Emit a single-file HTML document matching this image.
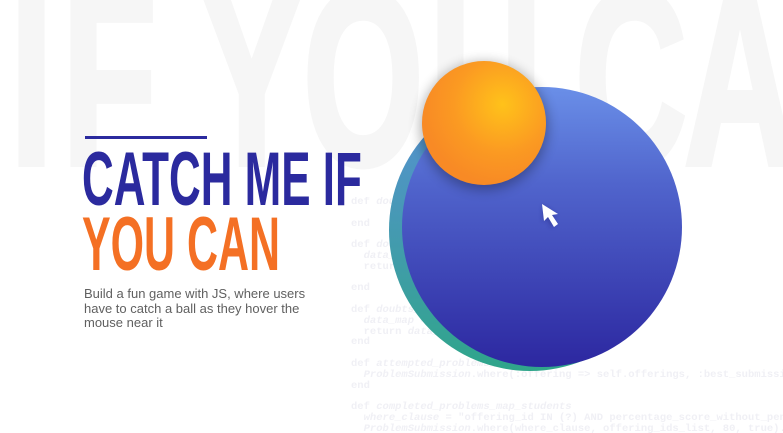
<!DOCTYPE html>
<html><head><meta charset="utf-8"><style>
html,body{margin:0;padding:0}
body{width:783px;height:433px;overflow:hidden;background:#fff;position:relative;font-family:"Liberation Sans",sans-serif}
.bg{position:absolute;color:#f6f6f6;font-weight:bold;font-size:250px;line-height:1;top:-47px;transform-origin:0 0;transform:scaleX(.62);-webkit-text-stroke:6px #f6f6f6}
.codewrap{position:absolute;left:351px;top:197px;width:432px;height:236px;overflow:hidden}
.code{font-family:"Liberation Mono",monospace;font-weight:bold;font-size:10.5px;line-height:10.8px;color:#f0f0f5;white-space:pre}
.t{position:absolute;left:82px;font-weight:bold;font-size:76px;line-height:1;transform-origin:0 0;white-space:nowrap}
</style></head><body>
<div class="bg" style="left:10px">I</div>
<div class="bg" style="left:62px">F</div>
<div class="bg" style="left:200px">Y</div>
<div class="bg" style="left:303px">O</div>
<div class="bg" style="left:430px">U</div>
<div class="bg" style="left:575px">C</div>
<div class="bg" style="left:684px">A</div>

<div class="codewrap"><div class="code">def <i>doubts_map</i>

end

def <i>doubts_students</i>
  <i>data_map</i> = ...
  return data_map

end

def <i>doubts_to_students</i>
  <i>data_map</i> = ...
  return <i>data_map</i>
end

def <i>attempted_problems_map</i>
  <i>ProblemSubmission</i>.where(:offering => self.offerings, :best_submission => true).group
end

def <i>completed_problems_map_students</i>
  <i>where_clause</i> = "offering_id IN (?) AND percentage_score_without_penalty >= ? AND best
  <i>ProblemSubmission</i>.where(where_clause, offering_ids_list, 80, true).group(:user_id).c</div></div>

<div style="position:absolute;left:85px;top:136px;width:122px;height:3px;background:#2b2a9e"></div>
<div class="t" style="top:142px;color:#2b2a9e;transform:scaleX(.578)">CATCH ME IF</div>
<div class="t" style="top:207px;color:#f47024;transform:scaleX(.565)">YOU CAN</div>
<div style="position:absolute;left:84px;top:287px;width:245px;font-size:13px;line-height:14.5px;color:#606060">Build a fun game with JS, where users have to catch a ball as they hover the mouse near it</div>

<svg style="position:absolute;left:0;top:0" width="783" height="433">
<defs>
<linearGradient id="tl" x1="0" y1="0" x2="0" y2="1"><stop offset="0" stop-color="#5a8fd8"/><stop offset="1" stop-color="#2fa58a"/></linearGradient>
<linearGradient id="bl" x1="0" y1="0" x2="0" y2="1"><stop offset="0" stop-color="#6a8fe8"/><stop offset=".35" stop-color="#5064cc"/><stop offset="1" stop-color="#2c27a0"/></linearGradient>
<radialGradient id="or" cx=".65" cy=".35" r=".65"><stop offset="0" stop-color="#ffc21a"/><stop offset=".6" stop-color="#fb9a22"/><stop offset="1" stop-color="#f88a25"/></radialGradient>
<filter id="sh" x="-40%" y="-40%" width="180%" height="180%"><feGaussianBlur stdDeviation="6"/></filter>
<filter id="sh2" x="-50%" y="-50%" width="200%" height="200%"><feGaussianBlur stdDeviation="2.5"/></filter>
</defs>
<circle cx="530" cy="230" r="141" fill="url(#tl)"/>
<circle cx="542" cy="227" r="140" fill="url(#bl)"/>
<circle cx="484" cy="126" r="64" fill="#000" opacity=".3" filter="url(#sh)"/>
<circle cx="484" cy="123" r="62" fill="url(#or)"/>
<path d="M543 205 L543 222 L547 218 L551 227 L555 225 L551 217 L557 216 Z" fill="#1a1a70" opacity=".4" filter="url(#sh2)"/>
<path d="M542 204 L544 221 L548 217 L554 227 L558 224 L552 215 L558 214 Z" fill="#fff"/>
</svg>
</body></html>
